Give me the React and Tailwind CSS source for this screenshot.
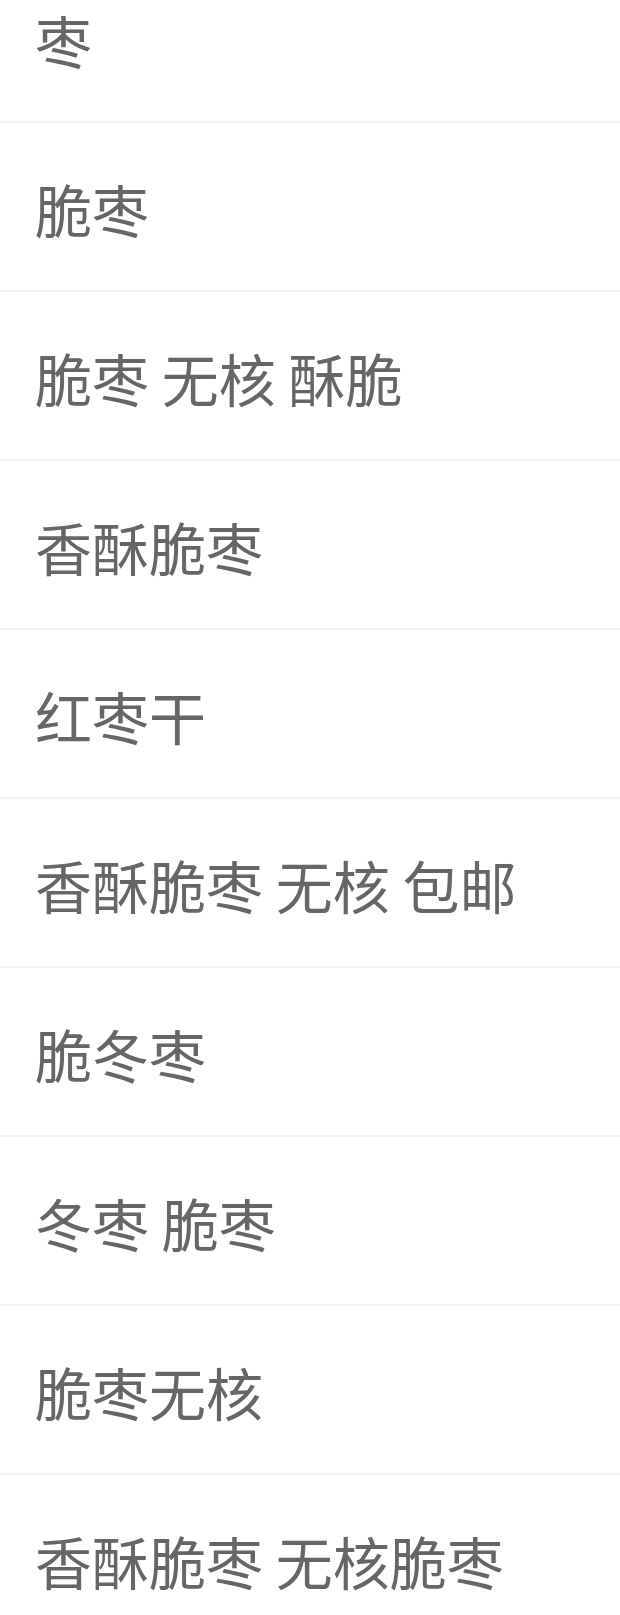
import React from 'react';

const suggestions = [
  '枣',
  '脆枣',
  '脆枣 无核 酥脆',
  '香酥脆枣',
  '红枣干',
  '香酥脆枣 无核 包邮',
  '脆冬枣',
  '冬枣 脆枣',
  '脆枣无核',
  '香酥脆枣 无核脆枣',
];

export default function App() {
  return (
    <div className="w-[620px] h-[1615px] overflow-hidden bg-white">
      <ul className="-mt-[46px]" style={{ fontFamily: '"Noto Sans CJK SC", "Noto Sans", sans-serif' }}>
        {suggestions.map((s, i) => (
          <li
            key={i}
            className="h-[169px] flex items-center pl-[35px] pt-[3px] border-b-2 border-[#f3f3f3] text-[57px] leading-none text-[#666666] whitespace-pre"
          >
            {s}
          </li>
        ))}
      </ul>
    </div>
  );
}
